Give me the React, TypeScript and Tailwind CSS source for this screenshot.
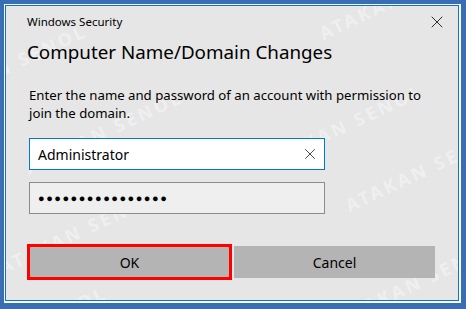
import { X } from 'lucide-react';

// watermark positions: start of the baseline, in px inside the dialog
const marks = [
  { x: -66, y: 110 },
  { x: 30, y: 176 },
  { x: 324, y: 42 },
  { x: 270, y: 170 },
  { x: 4, y: 276 },
  { x: -46, y: 372 },
  { x: 350, y: 214 },
  { x: 344, y: 326 },
];

export default function App() {
  return (
    <div
      className="w-[466px] h-[309px] bg-[#3b6db3] pt-[4px] pl-[4px] pr-[5px] pb-[6px]"
      style={{ fontFamily: '"Segoe UI", "Noto Sans", sans-serif' }}
    >
      <div className="h-full border border-white border-b-2 border-r-2">
        <div className="relative h-full overflow-hidden border border-[#0078d7] bg-[#e6e6e6] text-[#000]">
          {/* watermark */}
          {marks.map((m, i) => (
            <span
              key={i}
              aria-hidden
              className="pointer-events-none absolute origin-bottom-left -rotate-[25deg] whitespace-nowrap text-[18px] leading-[18px] font-bold tracking-[3px] text-white/40"
              style={{ left: m.x - 6, top: m.y - 24 }}
            >
              ATAKAN SENOL
            </span>
          ))}

          <div className="relative flex flex-col pl-[23px] pr-[22px]">
            {/* title bar */}
            <div className="mt-[8px] flex h-[16px] items-center justify-between">
              <span className="ml-[-2px] text-[11.5px] leading-[16px]">Windows Security</span>
              <X className="mr-[-11px] h-[20px] w-[20px] text-[#1a1a1a]" strokeWidth={1.1} />
            </div>

            <h1 className="ml-[-2px] mt-[9px] text-[18.8px] leading-[26px]">Computer Name/Domain Changes</h1>

            <p className="mt-[21px] text-[13.2px] leading-[18px]">
              Enter the name and password of an account with permission to join the domain.
            </p>

            <div className="mt-[16px] flex h-[32px] w-[296px] items-center justify-between border border-[#0078d7] bg-white pl-[8px] pr-[5px]">
              <span className="text-[14px]">Administrator</span>
              <X className="h-[18px] w-[18px] text-[#333]" strokeWidth={1.2} />
            </div>

            <div className="mt-[12px] flex h-[32px] w-[296px] items-center border border-[#8c8c8c] bg-[#efefef] pl-[8px]">
              <span className="text-[11px] tracking-[1.5px]">●●●●●●●●●●●●●●●●</span>
            </div>

            <div className="mt-[32px] flex gap-[4px]">
              <button className="h-[32px] w-[201px] bg-[#b4b4b4] text-[14px] outline outline-[3px] outline-offset-[-1px] outline-[#ff0000]">
                OK
              </button>
              <button className="h-[32px] w-[201px] bg-[#b4b4b4] text-[14px]">Cancel</button>
            </div>
          </div>
        </div>
      </div>
    </div>
  );
}
